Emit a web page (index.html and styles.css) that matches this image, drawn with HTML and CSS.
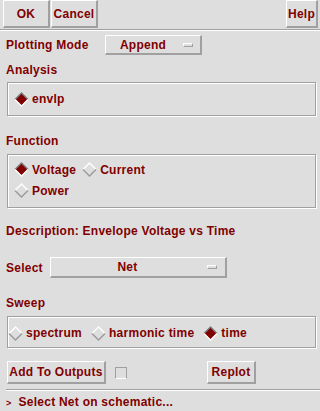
FILE: index.html
```html
<!DOCTYPE html>
<html lang="en">
<head>
  <meta charset="UTF-8">
  <meta name="viewport" content="width=device-width, initial-scale=1.0">
  <title>Direct Plot Form</title>
  <link rel="stylesheet" href="styles.css">
</head>
<body>
  <div class="dialog">
    <div class="toolbar">
      <button class="btn btn-ok">OK</button>
      <button class="btn btn-cancel">Cancel</button>
      <span class="grow"></span>
      <button class="btn btn-help">Help</button>
    </div>
    <div class="sep"></div>

    <div class="form">
      <div class="row mode-row">
        <span class="label mode-label">Plotting Mode</span>
        <div class="option append"><span class="option-text">Append</span><span class="ind"></span></div>
      </div>

      <div class="title analysis-title">Analysis</div>
      <div class="frame analysis-frame">
        <div class="radio-row">
          <label class="radio"><svg class="dia" width="15" height="15" viewBox="0 0 15 15"><polygon points="7.5,1 14,7.5 7.5,14 1,7.5" fill="#800000"/><polyline points="1,7.5 7.5,1 14,7.5" fill="none" stroke="#7a7a7a" stroke-width="1.4"/><polyline points="1,7.5 7.5,14 14,7.5" fill="none" stroke="#fff" stroke-width="1.4"/></svg>envlp</label>
        </div>
      </div>

      <div class="title function-title">Function</div>
      <div class="frame function-frame">
        <div class="radio-row">
          <label class="radio"><svg class="dia" width="15" height="15" viewBox="0 0 15 15"><polygon points="7.5,1 14,7.5 7.5,14 1,7.5" fill="#800000"/><polyline points="1,7.5 7.5,1 14,7.5" fill="none" stroke="#7a7a7a" stroke-width="1.4"/><polyline points="1,7.5 7.5,14 14,7.5" fill="none" stroke="#fff" stroke-width="1.4"/></svg>Voltage</label>
          <label class="radio"><svg class="dia" width="15" height="15" viewBox="0 0 15 15"><polyline points="1,7.5 7.5,1 14,7.5" fill="none" stroke="#fff" stroke-width="1.4"/><polyline points="1,7.5 7.5,14 14,7.5" fill="none" stroke="#9a9a9a" stroke-width="1.4"/></svg>Current</label>
        </div>
        <div class="radio-row">
          <label class="radio"><svg class="dia" width="15" height="15" viewBox="0 0 15 15"><polyline points="1,7.5 7.5,1 14,7.5" fill="none" stroke="#fff" stroke-width="1.4"/><polyline points="1,7.5 7.5,14 14,7.5" fill="none" stroke="#9a9a9a" stroke-width="1.4"/></svg>Power</label>
        </div>
      </div>

      <div class="title desc">Description: Envelope Voltage vs Time</div>

      <div class="row select-row">
        <span class="label select-label">Select</span>
        <div class="option net"><span class="option-text">Net</span><span class="ind"></span></div>
      </div>

      <div class="title sweep-title">Sweep</div>
      <div class="frame sweep-frame">
        <div class="radio-row">
          <label class="radio"><svg class="dia" width="15" height="15" viewBox="0 0 15 15"><polyline points="1,7.5 7.5,1 14,7.5" fill="none" stroke="#fff" stroke-width="1.4"/><polyline points="1,7.5 7.5,14 14,7.5" fill="none" stroke="#9a9a9a" stroke-width="1.4"/></svg>spectrum</label>
          <label class="radio"><svg class="dia" width="15" height="15" viewBox="0 0 15 15"><polyline points="1,7.5 7.5,1 14,7.5" fill="none" stroke="#fff" stroke-width="1.4"/><polyline points="1,7.5 7.5,14 14,7.5" fill="none" stroke="#9a9a9a" stroke-width="1.4"/></svg>harmonic time</label>
          <label class="radio"><svg class="dia" width="15" height="15" viewBox="0 0 15 15"><polygon points="7.5,1 14,7.5 7.5,14 1,7.5" fill="#800000"/><polyline points="1,7.5 7.5,1 14,7.5" fill="none" stroke="#7a7a7a" stroke-width="1.4"/><polyline points="1,7.5 7.5,14 14,7.5" fill="none" stroke="#fff" stroke-width="1.4"/></svg>time</label>
        </div>
      </div>

      <div class="row actions">
        <button class="btn btn-add">Add To Outputs</button>
        <span class="check"></span>
        <button class="btn btn-replot">Replot</button>
      </div>
    </div>

    <div class="sep sep-bottom"></div>
    <div class="status"><span class="prompt">&gt;</span>Select Net on schematic...</div>
  </div>
</body>
</html>
```

FILE: styles.css
```css
body, html {
  margin: 0;
  padding: 0;
  background: #dedede;
}
.dialog {
  width: 320px;
  height: 411px;
  overflow: hidden;
  background: #dedede;
  color: #800000;
  font-family: 'Liberation Sans', Arial, sans-serif;
  font-size: 12px;
  font-weight: bold;
  line-height: 14px;
  letter-spacing: 0.25px;
}
.btn {
  font: inherit;
  color: inherit;
  letter-spacing: inherit;
  background: #dedede;
  border-style: solid;
  border-width: 1px 2px 2px 1px;
  border-color: #fff #a0a0a0 #a0a0a0 #fff;
  padding: 0;
  margin: 0;
  box-sizing: border-box;
  text-align: center;
}
.toolbar {
  display: flex;
  align-items: flex-start;
  height: 29px;
  padding: 0 2px 0 3px;
}
.toolbar .btn {
  height: 28px;
}
.btn-ok { width: 47px; }
.btn-cancel { width: 47px; margin-left: 1px; }
.btn-help { width: 32px; }
.grow { flex: 1; }
.sep {
  border-top: 1px solid #a0a0a0;
  border-bottom: 1px solid #fff;
}
.form {
  padding: 0 5px 0 6px;
}
.row {
  display: flex;
  align-items: center;
}
.label {
  line-height: 20px;
}
.mode-row {
  margin-top: 4px;
  height: 20px;
}
.mode-label { width: 99px; }
.option {
  display: flex;
  align-items: center;
  box-sizing: border-box;
  border-style: solid;
  border-width: 1px 2px 2px 1px;
  border-color: #fff #a0a0a0 #a0a0a0 #fff;
  height: 100%;
}
.option-text {
  flex: 1;
  text-align: center;
}
.ind {
  width: 10px;
  height: 4px;
  box-sizing: border-box;
  border-style: solid;
  border-width: 1px;
  border-color: #fff #a0a0a0 #a0a0a0 #fff;
  margin: 0 7px 0 3px;
}
.append { width: 97px; }
.analysis-title { margin-top: 8px; }
.function-title { margin-top: 18px; }
.desc { margin-top: 16px; }
.sweep-title { margin-top: 18px; }
.frame {
  margin-left: 1px;
  width: 309px;
  box-sizing: border-box;
  border: 1px solid #a0a0a0;
  box-shadow: inset 1px 1px 0 #fff, 1px 1px 0 #fff;
}
.analysis-frame {
  margin-top: 5px;
  height: 34px;
  padding: 6px 0 0 6px;
}
.function-frame {
  margin-top: 6px;
  height: 54px;
  padding: 4px 0 0 6px;
}
.sweep-frame {
  margin-top: 6px;
  height: 32px;
  padding: 6px 0 0 0;
}
.radio-row {
  display: flex;
  align-items: center;
  height: 21px;
}
.analysis-frame .radio-row,
.sweep-frame .radio-row {
  height: 20px;
}
.radio {
  display: flex;
  align-items: center;
  margin-right: 6px;
}
.sweep-frame .radio {
  margin-right: 9px;
}
.dia {
  margin-right: 3px;
  flex-shrink: 0;
}
.select-row {
  margin-top: 19px;
  height: 21px;
}
.select-label { width: 44px; }
.net { width: 177px; }
.net .ind { margin-right: 8px; }
.actions {
  margin-top: 13px;
  height: 23px;
}
.btn-add {
  width: 99px;
  height: 23px;
  margin-left: 1px;
}
.check {
  width: 12px;
  height: 12px;
  box-sizing: border-box;
  border: 1px solid #a0a0a0;
  border-bottom-color: #fff;
  margin-left: 9px;
}
.btn-replot {
  width: 49px;
  height: 23px;
  margin-left: 80px;
}
.sep-bottom {
  margin: 5px 0 0 6px;
}
.status {
  margin-top: 4px;
  padding-left: 6px;
}
.prompt {
  font-size: 9px;
  margin-right: 7px;
}
```
